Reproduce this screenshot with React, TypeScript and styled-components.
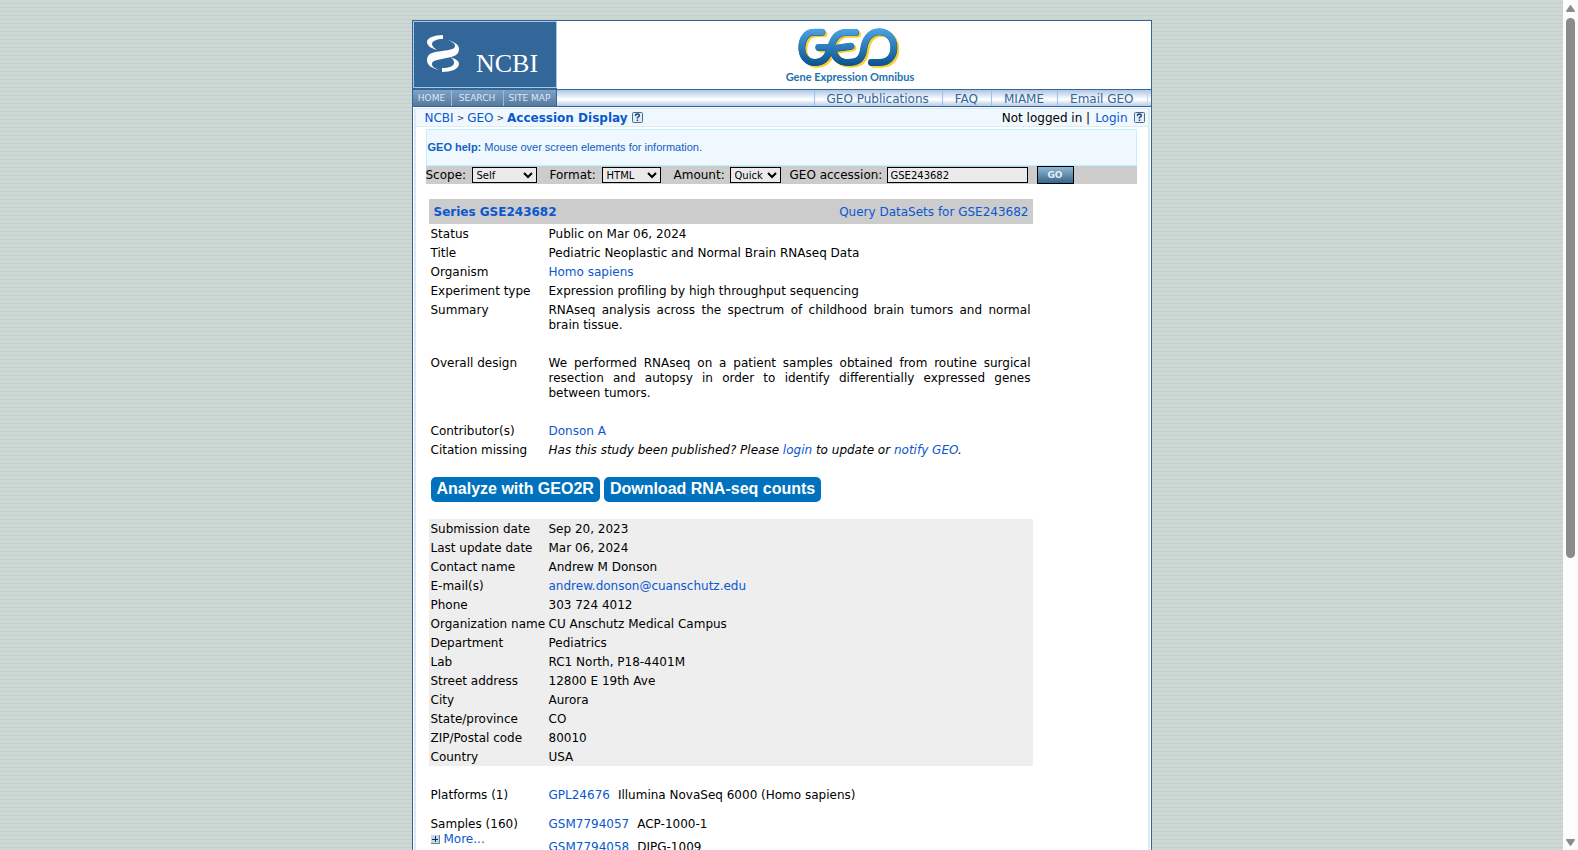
import React from "react";
import styled, { createGlobalStyle } from "styled-components";

const navy = "#336699";
const link = "#0a57cf";
const sans = `"DejaVu Sans", Verdana, sans-serif`;

const GlobalStyle = createGlobalStyle`
  * { box-sizing: border-box; }
  body { margin: 0; font: 12px/15px ${sans}; color: #000; }
  a { color: ${link}; text-decoration: none; }
`;

const Viewport = styled.div`
  display: grid;
  grid-template-columns: minmax(0, 1fr) 15px;
  height: 100vh;
  overflow: hidden;
  background: repeating-linear-gradient(to bottom, #cdd8d5 0 3px, #c4d0ce 3px 4px);
`;

const Scroller = styled.div`
  display: flex;
  justify-content: center;
  overflow: hidden;
  padding-top: 20px;
`;

const ScrollTrack = styled.div`
  display: grid;
  grid-template-rows: 18px 1fr 18px;
  justify-items: center;
  background: #fcfcfc;
`;

const ScrollThumb = styled.div`
  width: 9px;
  height: 66.4%;
  border-radius: 5px;
  background: #8b8b8b;
`;

const ScrollArrow = styled.svg<{ $down?: boolean }>`
  width: 9px;
  height: 8px;
  align-self: ${(p) => (p.$down ? "start" : "center")};
  margin-top: ${(p) => (p.$down ? "7px" : "0")};
  fill: #8b8b8b;
`;

const Page = styled.div`
  display: flex;
  flex-direction: column;
  width: 740px;
  flex: none;
  min-height: 100%;
  border: 1px solid ${navy};
  border-width: 1px 1px 0;
  background: #fff;
`;

const Masthead = styled.header`
  display: grid;
  grid-template-columns: 144px 1fr;
  flex: none;
  height: 68px;
`;

const NcbiLogo = styled.a`
  display: block;
  height: 67px;
  background: ${navy};
  border: 1px solid #a9c7dc;
  box-shadow: 0 1px ${navy};
  svg { display: block; }
`;

const GeoLogo = styled.a`
  display: flex;
  justify-content: center;
  padding-right: 7px;
  svg { display: block; }
`;

const NavLine = styled.nav`
  display: grid;
  grid-template-columns: 144px 1fr;
  flex: none;
  height: 18px;
  border: solid ${navy};
  border-width: 1px 0;
`;

const SiteLinks = styled.div`
  display: flex;
  background: linear-gradient(#7fa3c8, #55789f);
  border-right: 1px solid ${navy};
`;

const SiteLink = styled.a<{ $w: number }>`
  && { color: #dce8f2; }
  width: ${(p) => p.$w}px;
  text-align: center;
  font: 9px/16px ${sans};
  border-left: 1px solid #9dbbd5;
  white-space: nowrap;
  &:first-child { border-left: 0; }
`;

const GeoLinks = styled.div`
  display: flex;
  justify-content: flex-end;
  padding-right: 3px;
  background: linear-gradient(#b0c6e2, #f3f7fd 50%, #fff 60%, #b6cbe6);
`;

const GeoLink = styled.a`
  && { color: ${navy}; }
  line-height: 18px;
  height: 16px;
  padding: 0 13px 0 12px;
  border-left: 1px solid #99c2f5;
  &:last-child { border-right: 1px solid #c8d4e6; }
`;

const Frame = styled.div`
  flex: 1 0 auto;
  margin: 1px 1px 0;
  border: 2px solid #e0ecec;
  border-width: 1px 2px 0;
`;

const Crumbs = styled.div`
  display: flex;
  justify-content: space-between;
  height: 18px;
  padding: 1px 3px 0 9px;
  line-height: 17px;
  background: #eff7ff;
  border-bottom: 1px solid #e0ecec;
  white-space: nowrap;
`;

const CrumbGroup = styled.div<{ $gap: number }>`
  display: flex;
  align-items: center;
  gap: ${(p) => p.$gap}px;
`;

const Separator = styled.span`
  font-size: 9px;
  color: #336;
`;

const HelpButton = styled.button`
  display: block;
  border: 0;
  padding: 0;
  margin: 0 0 2px 1px;
  background: none;
  svg { display: block; }
`;

const Body = styled.main`
  padding: 2px 11px 0 10px;
`;

const HelpBox = styled.div`
  height: 37px;
  padding: 0 1px;
  border: 1px solid #bff3fa;
  background: #eff7ff;
  color: #1160c0;
  font: 11px/35px "Liberation Sans", Arial, sans-serif;
`;

const QueryBar = styled.form`
  display: flex;
  align-items: center;
  height: 18px;
  background: #ccc;
  white-space: nowrap;
`;

const FieldLabel = styled.label<{ $w: number }>`
  width: ${(p) => p.$w}px;
`;

const Select = styled.select<{ $w: number; $gap: number }>`
  width: ${(p) => p.$w}px;
  height: 16px;
  margin-right: ${(p) => p.$gap}px;
  padding: 0;
  border: 1px solid #000;
  border-radius: 0;
  background-color: #eaeaea;
  color: #000;
  font: 10px/14px ${sans};
`;

const AccessionInput = styled.input`
  width: 141px;
  height: 16px;
  margin-right: 9px;
  padding: 0 3px;
  border: 1px solid #000;
  background: #eaeaea;
  color: #000;
  font: 10px/14px ${sans};
`;

const GoButton = styled.button`
  width: 37px;
  height: 18px;
  padding: 0;
  border: 1px solid #000;
  background: linear-gradient(#8fb9d0, #38658f);
  color: #e6f0f6;
  font: bold 9px/14px ${sans};
`;

const Record = styled.section`
  width: 604px;
  margin: 15px 0 0 3px;
`;

const RecordTitle = styled.div`
  display: flex;
  justify-content: space-between;
  height: 25px;
  padding: 0 4px 0 5px;
  line-height: 27px;
  background: #ccc;
`;

const DataTable = styled.table<{ $shaded?: boolean }>`
  width: 100%;
  table-layout: fixed;
  border-collapse: collapse;
  background: ${(p) => (p.$shaded ? "#eee" : "none")};
`;

const KeyCell = styled.th<{ $bottom?: number }>`
  width: 118px;
  padding: 3px 0 ${(p) => p.$bottom ?? 1}px 2px;
  font-weight: normal;
  text-align: left;
  vertical-align: top;
  white-space: nowrap;
`;

const ValueCell = styled.td<{ $bottom?: number }>`
  padding: 3px 2px ${(p) => p.$bottom ?? 1}px;
  text-align: justify;
  vertical-align: top;
`;

const Actions = styled.div`
  display: flex;
  gap: 4px;
  padding: 18px 2px 17px;
`;

const ActionButton = styled.button`
  height: 25px;
  padding: 0 6px 2px;
  border: 0;
  border-radius: 5px;
  background: #0071bc;
  color: #fff;
  font: bold 16px/23px "Liberation Sans", Arial, sans-serif;
  white-space: nowrap;
`;

const Spacer = styled.div`
  height: 19px;
`;

const LinkedList = styled.ul`
  display: grid;
  gap: 8px;
  margin: 0;
  padding: 0;
  list-style: none;
  a { margin-right: 8px; }
`;

const MoreLink = styled.a`
  display: flex;
  align-items: center;
  gap: 4px;
`;

const Question = () => (
  <HelpButton type="button" aria-label="Help">
    <svg width="11" height="11" viewBox="0 0 11 11">
      <rect x=".5" y=".5" width="10" height="10" rx="1" fill="#e4edf6" stroke="#426c94" />
      <path d="M3.5 4V3.2Q3.5 2 5.4 2T7.4 3.5Q7.4 4.6 5.5 5.4V6.6M5.5 7.6V9" fill="none" stroke="#173e68" strokeWidth="1.4" />
    </svg>
  </HelpButton>
);

const geoOutline =
  "M188 66H164C140 66 128 90 128 112C128 139 144 157 168 157C192 157 204 142 211 122C220 92 230 67 260 67H289M179 112H212M220 116L275 108M220 112C224 142 239 157 266 157C292 157 308 151 313 120C317 88 333 65 360 65C388 65 404 86 404 112C404 139 388 157 361 157H337";

const submission: [string, React.ReactNode][] = [
  ["Submission date", "Sep 20, 2023"],
  ["Last update date", "Mar 06, 2024"],
  ["Contact name", "Andrew M Donson"],
  ["E-mail(s)", <a href="#email">andrew.donson@cuanschutz.edu</a>],
  ["Phone", "303 724 4012"],
  ["Organization name", "CU Anschutz Medical Campus"],
  ["Department", "Pediatrics"],
  ["Lab", "RC1 North, P18-4401M"],
  ["Street address", "12800 E 19th Ave"],
  ["City", "Aurora"],
  ["State/province", "CO"],
  ["ZIP/Postal code", "80010"],
  ["Country", "USA"],
];

const study: [string, React.ReactNode, number?][] = [
  ["Status", "Public on Mar 06, 2024"],
  ["Title", "Pediatric Neoplastic and Normal Brain RNAseq Data"],
  ["Organism", <a href="#organism">Homo sapiens</a>],
  ["Experiment type", "Expression profiling by high throughput sequencing"],
  ["Summary", "RNAseq analysis across the spectrum of childhood brain tumors and normal brain tissue.", 20],
  [
    "Overall design",
    "We performed RNAseq on a patient samples obtained from routine surgical resection and autopsy in order to identify differentially expressed genes between tumors.",
    20,
  ],
  ["Contributor(s)", <a href="#contributor">Donson A</a>],
  [
    "Citation missing",
    <i>
      Has this study been published? Please <a href="#login">login</a> to update or <a href="#notify">notify GEO</a>.
    </i>,
  ],
];

const Rows = ({ items }: { items: [string, React.ReactNode, number?][] }) => (
  <tbody>
    {items.map(([key, value, bottom]) => (
      <tr key={key}>
        <KeyCell scope="row" $bottom={bottom}>{key}</KeyCell>
        <ValueCell $bottom={bottom}>{value}</ValueCell>
      </tr>
    ))}
  </tbody>
);

export default function App() {
  return (
    <Viewport>
      <GlobalStyle />
      <Scroller>
        <Page>
          <Masthead>
            <NcbiLogo href="#ncbi" aria-label="NCBI">
              <svg width="142" height="65" viewBox="0 0 142 65">
                <g fill="#fff">
                  <path d="M29 13V17C23 17 18 19 18 22C18 24 20 26 23 28C16 26 13 23 13 20C13 16 20 13 29 13Z" />
                  <path d="M34 18C40 20 45 22 45 27C45 35 36 35 28 37C22 38 18 39 18 42C18 45 21 46 25 48C17 46 13 43 13 38C13 31 20 30 28 29C36 28 41 27 41 24C41 21 38 20 34 18Z" />
                  <path d="M36 35C42 37 45 39 45 42C45 47 37 50 28 50V46C35 46 40 44 40 41C40 38 39 37 36 35Z" />
                </g>
                <text x="62" y="50" fill="#fff" fontFamily="'Liberation Serif', serif" fontSize="26">NCBI</text>
              </svg>
            </NcbiLogo>
            <GeoLogo href="#geo" aria-label="Gene Expression Omnibus">
              <svg width="140" height="66" viewBox="0 0 140 66">
                <defs>
                  <linearGradient id="geo" gradientUnits="userSpaceOnUse" x1="0" y1="55" x2="0" y2="170">
                    <stop offset="0" stopColor="#4ca5e2" />
                    <stop offset="1" stopColor="#09508c" />
                  </linearGradient>
                </defs>
                <g transform="translate(-21 -11) scale(.3333)" fill="none" strokeWidth="20" strokeLinecap="round">
                  <path d={geoOutline} stroke="#f8cd35" transform="translate(7 6)" />
                  <path d={geoOutline} stroke="#17466f" transform="translate(1 1)" />
                  <path d={geoOutline} stroke="url(#geo)" />
                </g>
                <text x="70" y="60" textAnchor="middle" fill="#1d72b0" fontFamily="Lato, sans-serif" fontWeight="700" fontSize="11">
                  Gene Expression Omnibus
                </text>
              </svg>
            </GeoLogo>
          </Masthead>
          <NavLine>
            <SiteLinks>
              <SiteLink href="#home" $w={38}>HOME</SiteLink>
              <SiteLink href="#search" $w={52}>SEARCH</SiteLink>
              <SiteLink href="#map" $w={53}>SITE MAP</SiteLink>
            </SiteLinks>
            <GeoLinks>
              <GeoLink href="#publications">GEO Publications</GeoLink>
              <GeoLink href="#faq">FAQ</GeoLink>
              <GeoLink href="#miame">MIAME</GeoLink>
              <GeoLink href="#email-geo">Email GEO</GeoLink>
            </GeoLinks>
          </NavLine>
          <Frame>
            <Crumbs>
              <CrumbGroup $gap={3}>
                <a href="#ncbi">NCBI</a>
                <Separator>&gt;</Separator>
                <a href="#geo">GEO</a>
                <Separator>&gt;</Separator>
                <a href="#display"><b>Accession Display</b></a>
                <Question />
              </CrumbGroup>
              <CrumbGroup $gap={5}>
                <span>Not logged in |</span>
                <a href="#login">Login</a>
                <Question />
              </CrumbGroup>
            </Crumbs>
            <Body>
              <HelpBox><b>GEO help:</b> Mouse over screen elements for information.</HelpBox>
              <QueryBar onSubmit={(e) => e.preventDefault()}>
                <FieldLabel htmlFor="scope" $w={46}>Scope:</FieldLabel>
                <Select id="scope" $w={65} $gap={13}><option>Self</option></Select>
                <FieldLabel htmlFor="format" $w={52}>Format:</FieldLabel>
                <Select id="format" $w={59} $gap={13}><option>HTML</option></Select>
                <FieldLabel htmlFor="amount" $w={56}>Amount:</FieldLabel>
                <Select id="amount" $w={51} $gap={9}><option>Quick</option></Select>
                <FieldLabel htmlFor="acc" $w={97}>GEO accession:</FieldLabel>
                <AccessionInput id="acc" defaultValue="GSE243682" />
                <GoButton type="submit">GO</GoButton>
              </QueryBar>
              <Record>
                <RecordTitle>
                  <a href="#series"><b>Series GSE243682</b></a>
                  <a href="#datasets">Query DataSets for GSE243682</a>
                </RecordTitle>
                <DataTable><Rows items={study} /></DataTable>
                <Actions>
                  <ActionButton type="button">Analyze with GEO2R</ActionButton>
                  <ActionButton type="button">Download RNA-seq counts</ActionButton>
                </Actions>
                <DataTable $shaded><Rows items={submission} /></DataTable>
                <Spacer />
                <DataTable>
                  <tbody>
                    <tr>
                      <KeyCell scope="row" $bottom={11}>Platforms (1)</KeyCell>
                      <ValueCell $bottom={11}>
                        <LinkedList>
                          <li><a href="#gpl">GPL24676</a>Illumina NovaSeq 6000 (Homo sapiens)</li>
                        </LinkedList>
                      </ValueCell>
                    </tr>
                    <tr>
                      <KeyCell scope="row">
                        Samples (160)
                        <MoreLink href="#more">
                          <svg width="9" height="9" viewBox="0 0 9 9">
                            <path d="M0 0H9V9H0Z" fill="#c9d6e4" />
                            <path d="M8.5 0V8.5H0" fill="none" stroke="#6f7f92" />
                            <path d="M1 4.5H7M4.5 1V7" stroke="#0a2f66" />
                          </svg>
                          More...
                        </MoreLink>
                      </KeyCell>
                      <ValueCell>
                        <LinkedList>
                          <li><a href="#s57">GSM7794057</a>ACP-1000-1</li>
                          <li><a href="#s58">GSM7794058</a>DIPG-1009</li>
                        </LinkedList>
                      </ValueCell>
                    </tr>
                  </tbody>
                </DataTable>
              </Record>
            </Body>
          </Frame>
        </Page>
      </Scroller>
      <ScrollTrack aria-hidden="true">
        <ScrollArrow viewBox="0 0 9 8"><path d="M4.5 0Q5 0 5.5 1L9 6Q9 7 8 7H1Q0 7 0 6L3.5 1Q4 0 4.5 0Z" /></ScrollArrow>
        <ScrollThumb />
        <ScrollArrow $down viewBox="0 0 9 8"><path d="M4.5 7Q5 7 5.5 6L9 1Q9 0 8 0H1Q0 0 0 1L3.5 6Q4 7 4.5 7Z" /></ScrollArrow>
      </ScrollTrack>
    </Viewport>
  );
}
